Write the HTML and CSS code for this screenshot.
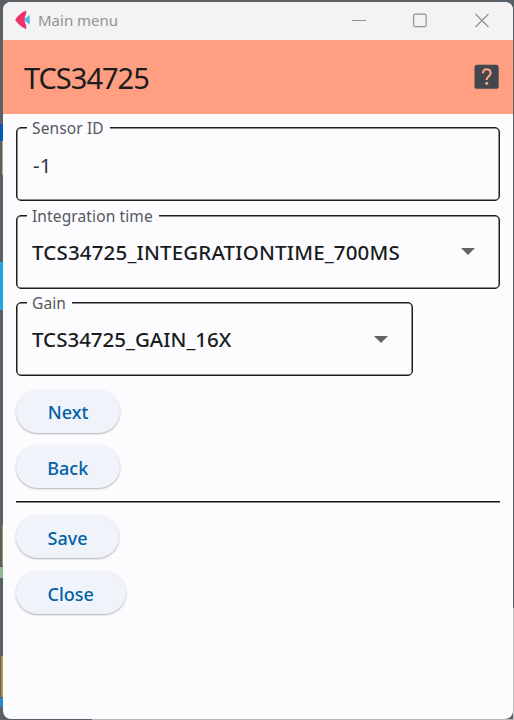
FILE: index.html
```html
<!DOCTYPE html>
<html lang="en">
<head>
<meta charset="utf-8">
<title>Main menu</title>
<link rel="stylesheet" href="styles.css">
</head>
<body>
<div class="window">
  <header class="titlebar">
    <svg class="logo" width="16" height="20" viewBox="0 0 16 20"><path d="M8 9.700L14.800 5v9.400z" fill="#55b9e8"/><path d="M11.200.5v3.200C9 7.500 9 12 11.200 15.500v3.700C6.500 17.500 3 14 .1 9.800 3 5.500 6.500 2.200 11.200.5z" fill="#ee3167"/></svg>
    <span class="caption">Main menu</span>
    <svg class="controls" width="140" height="16" viewBox="0 0 140 16" fill="none" stroke="#929292" stroke-width="1.2"><path d="M1 8.500h14"/><rect x="62.600" y="2.200" width="12.500" height="12.500" rx="1.500"/><path d="M124.500 2l13 13m0-13l-13 13"/></svg>
  </header>
  <div class="appbar">
    <h1>TCS34725</h1>
    <svg class="help" width="25" height="25" viewBox="0 0 25 25"><rect x=".5" y=".8" width="24.200" height="24" rx="2.600" fill="#42474e"/><path d="M9 9.300C9 3.800 16.600 4.100 16.600 8.900C16.600 12.100 12.700 12.400 12.700 16.100" fill="none" stroke="#ff9e80" stroke-width="2.200"/><circle cx="12.700" cy="19.300" r="1.600" fill="#ff9e80"/></svg>
  </div>
  <main class="content">
    <div class="field"><span class="label sensor">Sensor ID</span><span class="value plain">-1</span></div>
    <div class="field"><span class="label integration">Integration time</span><span class="value time">TCS34725_INTEGRATIONTIME_700MS</span><svg class="arrow" width="14" height="7" viewBox="0 0 14 7"><path d="M0 0h14L7 7z"/></svg></div>
    <div class="field short"><span class="label gain">Gain</span><span class="value gain-value">TCS34725_GAIN_16X</span><svg class="arrow" width="14" height="7" viewBox="0 0 14 7"><path d="M0 0h14L7 7z"/></svg></div>
    <button class="next">Next</button>
    <button class="back">Back</button>
    <hr>
    <button class="save">Save</button>
    <button class="close">Close</button>
  </main>
</div>
</body>
</html>
```

FILE: styles.css
```css
* { box-sizing: border-box; }
body {
  margin: 0;
  height: 720px;
  padding: 2px 1px 1px 3px;
  overflow: hidden;
  background:
    linear-gradient(#0758b5, #0758b5) 0 124px / 3px 17px no-repeat,
    linear-gradient(#c5a56c, #c5a56c) 2px 141px / 1px 34px no-repeat,
    linear-gradient(#22a5dc, #22a5dc) 0 262px / 3px 48px no-repeat,
    linear-gradient(#b5944e, #b5944e) 2px 525px / 1px 41px no-repeat,
    linear-gradient(#8cb894, #8cb894) 0 567px / 3px 11px no-repeat,
    linear-gradient(#b5944e, #b5944e) 1px 656px / 2px 41px no-repeat,
    linear-gradient(#2888c8, #2888c8) 0 698px / 3px 9px no-repeat,
    linear-gradient(#b5b5b5, #b5b5b5) 92px 719px / 422px 1px no-repeat,
    linear-gradient(#c2c2c2, #c2c2c2) 513px 608px / 1px 112px no-repeat,
    #596066;
  font-family: "Noto Sans", "Open Sans", sans-serif;
  color: #1a1c1e;
}
.window {
  height: 717px;
  border-radius: 8px;
  overflow: hidden;
  background: #fcfcff;
}
.titlebar {
  display: flex;
  align-items: center;
  height: 38px;
  padding: 0 22px 2px 12px;
  background: #f3f3f3;
}
.logo { flex: none; }
.caption { margin-left: 7px; font-size: 15px; color: #929292; white-space: nowrap; }
.controls { margin-left: auto; }
.appbar {
  display: flex;
  align-items: center;
  justify-content: space-between;
  height: 74px;
  padding: 0 14px 2px 21px;
  background: #ff9e80;
}
h1 { margin: 4px 0 0; font-size: 29px; font-weight: 400; line-height: 38px; letter-spacing: -1px; }
.content { display: flex; flex-direction: column; align-items: flex-start; padding: 13px 13px 0; }
.field {
  position: relative;
  display: flex;
  align-items: center;
  justify-content: space-between;
  width: 484px;
  height: 74px;
  margin-bottom: 13.500px;
  padding: 0 24px 0 15px;
  border: 1px solid #1a1c1e;
  border-radius: 5px;
  box-shadow: inset 0 0 0 .5px #1a1c1e;
}
.short { width: 397px; }
.label {
  position: absolute;
  top: -10px;
  left: 10px;
  padding: 0 6px 0 5px;
  background: #fcfcff;
  font-size: 15.500px;
  line-height: 21px;
  letter-spacing: .12px;
  color: #54585e;
  white-space: nowrap;
}
.value { font-size: 20.500px; line-height: 28px; font-weight: 500; letter-spacing: .17px; white-space: nowrap; }
.gain-value { letter-spacing: 0; }
.plain { padding: 1px 0 0 1px; font-weight: 400; color: #32363b; }
.arrow { fill: #646464; }
button {
  height: 43px;
  margin: 0 0 12.700px;
  padding: 2px 0 0;
  border: 0;
  border-radius: 22px;
  background: #f0f3fa;
  box-shadow: 0 1px 2px rgba(0, 0, 0, .3);
  font: 500 18px/24px "Noto Sans", "Open Sans", sans-serif;
  color: #0061a4;
}
.next { width: 104px; }
.back { width: 103.500px; }
.save { width: 103px; }
.close { width: 109.500px; }
hr { width: 484px; height: 1px; margin: 0 0 13.500px; border: 0; background: #111; box-shadow: 0 .5px 0 #111; }
```
